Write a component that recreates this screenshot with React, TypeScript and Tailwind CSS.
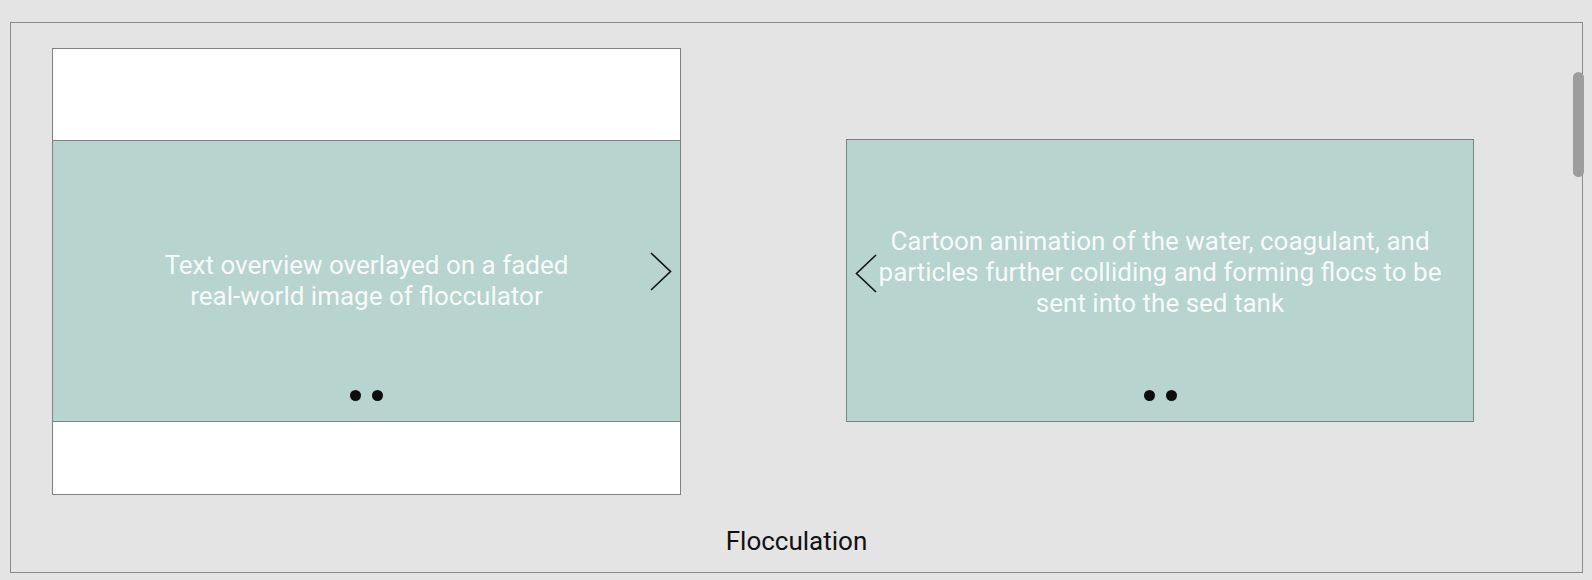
import React from 'react';

const Chevron: React.FC<{ dir: 'left' | 'right'; className?: string }> = ({ dir, className }) => (
  <svg width="22" height="39" viewBox="0 0 22 39" className={className} fill="none">
    {dir === 'right' ? (
      <path d="M1 1 L20.5 19.5 L1 38" stroke="#111" strokeWidth="1.6" />
    ) : (
      <path d="M21 1 L1.5 19.5 L21 38" stroke="#111" strokeWidth="1.6" />
    )}
  </svg>
);

const Dots: React.FC = () => (
  <div className="absolute bottom-[20px] left-0 right-0 flex justify-center gap-[11px]">
    <span className="w-[11px] h-[11px] rounded-full bg-[#0d0d0d]" />
    <span className="w-[11px] h-[11px] rounded-full bg-[#0d0d0d]" />
  </div>
);

export default function App() {
  return (
    <div className="w-[1592px] h-[580px] bg-[#e4e4e4] overflow-hidden pt-[22px] font-['Roboto',sans-serif]">
      <div className="relative ml-[10px] w-[1573px] h-[551px] border border-[#8a8a8a]">
        <div className="flex items-start pl-[41px] pt-[25px] gap-[165px]">
          {/* left slide: image frame with band */}
          <div className="w-[629px] h-[447px] bg-white border border-[#7c8381] flex flex-col">
            <div className="h-[91px]" />
            <div className="relative h-[282px] bg-[#b7d4ce] border-y border-[#7c8381] flex items-center justify-center">
              <p className="text-[26px] leading-[31px] font-normal text-[#f6faf9] text-center whitespace-nowrap">
                Text overview overlayed on a faded
                <br />
                real-world image of flocculator
              </p>
              <Chevron dir="right" className="absolute right-[8px] top-[111px]" />
              <Dots />
            </div>
          </div>

          {/* right slide */}
          <div className="relative mt-[91px] w-[628px] h-[283px] bg-[#b7d4ce] border border-[#7c8381] flex items-center justify-center pb-[16px]">
            <p className="text-[26px] leading-[31px] font-normal text-[#f6faf9] text-center whitespace-nowrap">
              Cartoon animation of the water, coagulant, and
              <br />
              particles further colliding and forming flocs to be
              <br />
              sent into the sed tank
            </p>
            <Chevron dir="left" className="absolute left-[8px] top-[114px]" />
            <Dots />
          </div>
        </div>

        <div className="mt-[31px] text-center text-[26px] leading-[30px] text-[#111]">
          Flocculation
        </div>

        {/* scrollbar thumb */}
        <div className="absolute left-[1562px] top-[49px] w-[11px] h-[105px] rounded-full bg-[#9d9d9d]" />
      </div>
    </div>
  );
}
